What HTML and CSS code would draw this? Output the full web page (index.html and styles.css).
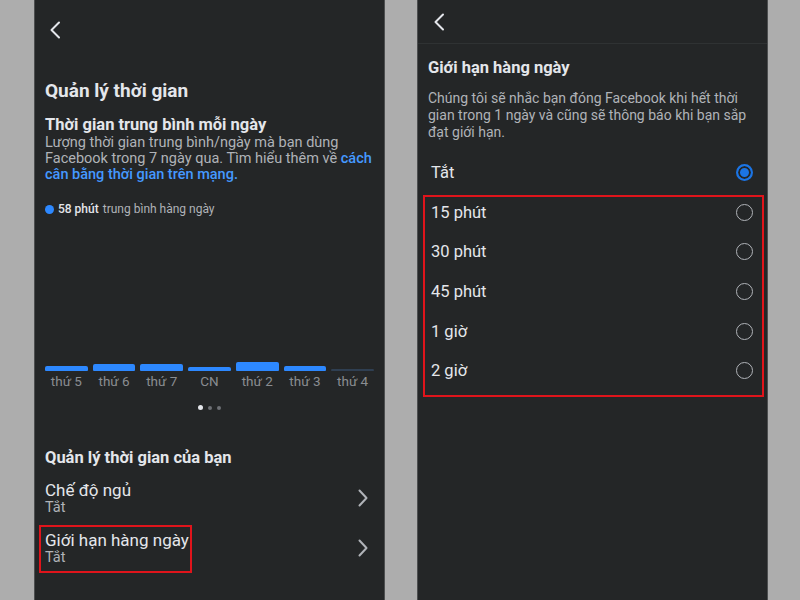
FILE: index.html
```html
<!DOCTYPE html>
<html lang="vi">
<head>
    <meta charset="UTF-8">
    <title>Quản lý thời gian</title>
    <link rel="stylesheet" href="styles.css">
</head>
<body>
    <div class="wrap">
        <!-- màn hình 1 -->
        <div class="screen left">
            <div class="nav">
                <svg class="back" width="12" height="18" viewBox="0 0 12 18"><path d="M10 1.5 2.5 9 10 16.5" fill="none" stroke="#e4e6eb" stroke-width="2" stroke-linecap="round" stroke-linejoin="round"/></svg>
            </div>
            <div class="title">Quản lý thời gian</div>
            <div class="subtitle">Thời gian trung bình mỗi ngày</div>
            <p class="desc">Lượng thời gian trung bình/ngày mà bạn dùng Facebook trong 7 ngày qua. Tìm hiểu thêm về <span class="link">cách</span> <span class="link">cân bằng thời gian trên mạng.</span></p>
            <div class="legend"><span class="dot"></span><b>58 phút</b> trung bình hàng ngày</div>
            <div class="chart">
                <div class="col"><div class="bar" style="height:5px"></div><span>thứ 5</span></div>
                <div class="col"><div class="bar" style="height:7px"></div><span>thứ 6</span></div>
                <div class="col"><div class="bar" style="height:7px"></div><span>thứ 7</span></div>
                <div class="col"><div class="bar" style="height:4px"></div><span>CN</span></div>
                <div class="col"><div class="bar" style="height:9px"></div><span>thứ 2</span></div>
                <div class="col"><div class="bar" style="height:5px"></div><span>thứ 3</span></div>
                <div class="col"><div class="bar empty"></div><span>thứ 4</span></div>
            </div>
            <div class="pager"><i class="on"></i><i></i><i></i></div>
            <div class="section">Quản lý thời gian của bạn</div>
            <div class="row">
                <div class="row-text">
                    <div class="row-title">Chế độ ngủ</div>
                    <div class="row-sub">Tắt</div>
                </div>
                <svg class="chev" width="10" height="18" viewBox="0 0 10 18"><path d="M1.5 1.5 8.5 9 1.5 16.5" fill="none" stroke="#b0b3b8" stroke-width="2" stroke-linecap="round" stroke-linejoin="round"/></svg>
            </div>
            <div class="row">
                <div class="row-text">
                    <div class="row-title">Giới hạn hàng ngày</div>
                    <div class="row-sub">Tắt</div>
                    <span class="mark mark-row"></span>
                </div>
                <svg class="chev" width="10" height="18" viewBox="0 0 10 18"><path d="M1.5 1.5 8.5 9 1.5 16.5" fill="none" stroke="#b0b3b8" stroke-width="2" stroke-linecap="round" stroke-linejoin="round"/></svg>
            </div>
        </div>

        <!-- màn hình 2 -->
        <div class="screen right">
            <div class="nav nav-line">
                <svg class="back" width="12" height="18" viewBox="0 0 12 18"><path d="M10 1.5 2.5 9 10 16.5" fill="none" stroke="#e4e6eb" stroke-width="2" stroke-linecap="round" stroke-linejoin="round"/></svg>
            </div>
            <div class="subtitle limit-title">Giới hạn hàng ngày</div>
            <p class="desc limit-desc">Chúng tôi sẽ nhắc bạn đóng Facebook khi hết thời gian trong 1 ngày và cũng sẽ thông báo khi bạn sắp đạt giới hạn.</p>
            <div class="option"><span>Tắt</span><i class="radio checked"></i></div>
            <div class="options">
                <div class="option"><span>15 phút</span><i class="radio"></i></div>
                <div class="option"><span>30 phút</span><i class="radio"></i></div>
                <div class="option"><span>45 phút</span><i class="radio"></i></div>
                <div class="option"><span>1 giờ</span><i class="radio"></i></div>
                <div class="option"><span>2 giờ</span><i class="radio"></i></div>
                <span class="mark mark-list"></span>
            </div>
        </div>
    </div>
</body>
</html>
```

FILE: styles.css
```css
/* nền xám, hai màn hình điện thoại đặt cạnh nhau */
body{
    margin: 0;
    background: #adadad;
    font-family: Roboto, "Noto Sans", sans-serif;
    color: #e4e6eb;
}
.wrap{
    display: flex;
    gap: 32px;
    padding-left: 34px;
    height: 600px;
}
.screen{
    width: 351px;
    height: 600px;
    box-sizing: border-box;
    background: #242627;
    border-left: 1px solid #4d4f50;
    border-right: 1px solid #4d4f50;
    padding: 0 10px;
    overflow: hidden;
}

/* thanh điều hướng */
.nav{
    height: 60px;
    display: flex;
    align-items: center;
    padding-left: 4px;
}
.nav-line{
    height: 43px;
    margin: 0 -10px;
    padding-left: 15px;
    border-bottom: 1px solid #2f3233;
}
.back{
    display: block;
}

.title{
    margin-top: 20px;
    font-size: 19px;
    line-height: 22px;
    font-weight: 700;
}
.subtitle{
    margin-top: 13px;
    font-size: 16.5px;
    line-height: 20px;
    font-weight: 700;
}
.desc{
    margin: 0;
    font-size: 14.5px;
    line-height: 16px;
    color: #b0b3b8;
}
.link{
    color: #4599ff;
    font-weight: 500;
}

/* chú thích biểu đồ */
.legend{
    margin-top: 19px;
    display: flex;
    align-items: center;
    font-size: 12px;
    line-height: 14px;
    color: #b0b3b8;
}
.legend b{
    color: #e4e6eb;
    font-weight: 500;
    margin-right: 4px;
}
.dot{
    width: 9px;
    height: 9px;
    border-radius: 50%;
    background: #2d88ff;
    margin-right: 4px;
}

/* biểu đồ cột */
.chart{
    height: 173px;
    display: grid;
    grid-template-columns: repeat(7, 1fr);
    column-gap: 5px;
    align-items: end;
}
.col{
    display: flex;
    flex-direction: column;
    align-items: center;
}
.bar{
    width: 100%;
    background: #2d88ff;
    border-radius: 2px 2px 1px 1px;
}
.bar.empty{
    height: 2px;
    background: #2f3f52;
}
.col span{
    margin-top: 2px;
    font-size: 13.5px;
    line-height: 16px;
    color: #8a8d91;
}

.pager{
    margin-top: 16px;
    display: flex;
    justify-content: center;
    align-items: center;
    gap: 5px;
}
.pager i{
    width: 4px;
    height: 4px;
    border-radius: 50%;
    background: #6d7074;
}
.pager i.on{
    width: 5px;
    height: 5px;
    background: #e4e6eb;
}

.section{
    margin-top: 38px;
    font-size: 16.5px;
    line-height: 20px;
    font-weight: 700;
}
.row{
    margin-top: 12px;
    display: flex;
    justify-content: space-between;
    align-items: center;
}
.row + .row{
    margin-top: 14px;
}
.row-text{
    position: relative;
}
.row-title{
    font-size: 17px;
    line-height: 20px;
}
.row-sub{
    font-size: 14.5px;
    line-height: 16px;
    color: #b0b3b8;
}
.chev{
    margin-right: 6px;
}

/* khung đỏ đánh dấu */
.mark{
    position: absolute;
    border: 2px solid #e0141b;
    box-sizing: border-box;
}
.mark-row{
    left: -6px;
    top: -5px;
    bottom: -7px;
    width: 153px;
}
.mark-list{
    left: -5px;
    right: -7px;
    top: 2px;
    bottom: -6px;
}

/* màn hình giới hạn */
.limit-title{
    margin-top: 14px;
}
.desc.limit-desc{
    margin: 12px 0;
    font-size: 14px;
    line-height: 17px;
}
.options{
    position: relative;
}
.option{
    height: 39.6px;
    display: flex;
    justify-content: space-between;
    align-items: center;
    padding: 0 4px 0 3px;
    font-size: 16.5px;
}
.radio{
    width: 17px;
    height: 17px;
    box-sizing: border-box;
    border-radius: 50%;
    border: 1.5px solid #b0b3b8;
}
.radio.checked{
    border: 2px solid #1b74e4;
    background: #1b74e4;
    box-shadow: inset 0 0 0 2px #242627;
}
```
